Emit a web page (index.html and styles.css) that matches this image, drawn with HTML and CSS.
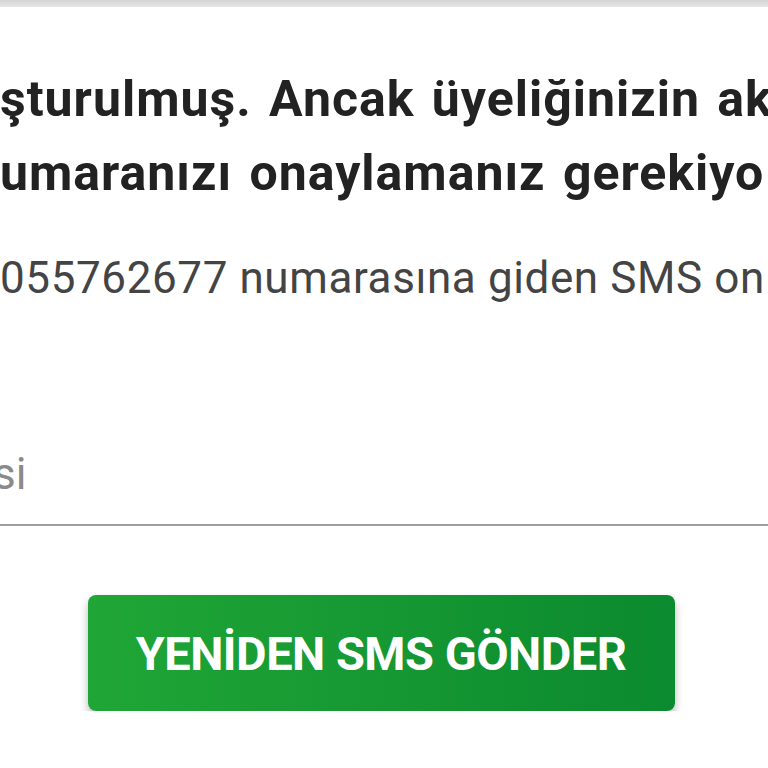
FILE: index.html
```html
<!DOCTYPE html>
<html lang="tr">
<head>
<meta charset="UTF-8">
<meta name="viewport" content="width=device-width, initial-scale=1.0">
<title>SMS Onayı</title>
<link rel="stylesheet" href="styles.css">
</head>
<body>
<div class="top-bar"></div>
<div class="panel">
    <div class="message">
        <div class="line">şturulmuş. Ancak üyeliğinizin ak</div>
        <div class="line">umaranızı onaylamanız gerekiyo</div>
    </div>
    <div class="info">055762677 numarasına giden SMS on</div>
    <div class="code-field">
        <span class="placeholder">si</span>
    </div>
    <div class="actions">
        <button class="resend-button">YENİDEN SMS GÖNDER</button>
    </div>
</div>
</body>
</html>
```

FILE: styles.css
```css
body {
    font-family: Roboto, "Noto Sans", Arial, sans-serif;
    background-color: #ffffff;
    margin: 0;
    overflow: hidden;
}
.top-bar {
    height: 7px;
    background: linear-gradient(#d4d4d4, #e6e6e6);
}
.panel {
    overflow: hidden;
}
.message {
    margin-top: 55px;
    font-size: 50px;
    font-weight: bold;
    line-height: 74px;
    letter-spacing: 1px;
    word-spacing: 4px;
    color: #222;
    white-space: nowrap;
}
.info {
    margin-top: 38px;
    font-size: 44px;
    line-height: 60px;
    letter-spacing: 0.6px;
    color: #444;
    white-space: nowrap;
}
.code-field {
    margin-top: 141px;
    padding-bottom: 25px;
    border-bottom: 2px solid #9e9e9e;
}
.placeholder {
    display: block;
    font-size: 44px;
    line-height: 50px;
    color: #8a8a8a;
    margin-left: -7px;
}
.actions {
    display: flex;
    justify-content: center;
    margin-top: 69px;
}
.resend-button {
    width: 587px;
    height: 116px;
    margin-right: 6px;
    font-family: Roboto, Arial, sans-serif;
    font-size: 47px;
    font-weight: bold;
    letter-spacing: -0.5px;
    color: #ffffff;
    background: linear-gradient(90deg, #20a636, #0b8a2f);
    border: none;
    border-radius: 8px;
    box-shadow: 0 5px 9px rgba(0, 0, 0, 0.28);
    cursor: pointer;
}
```
